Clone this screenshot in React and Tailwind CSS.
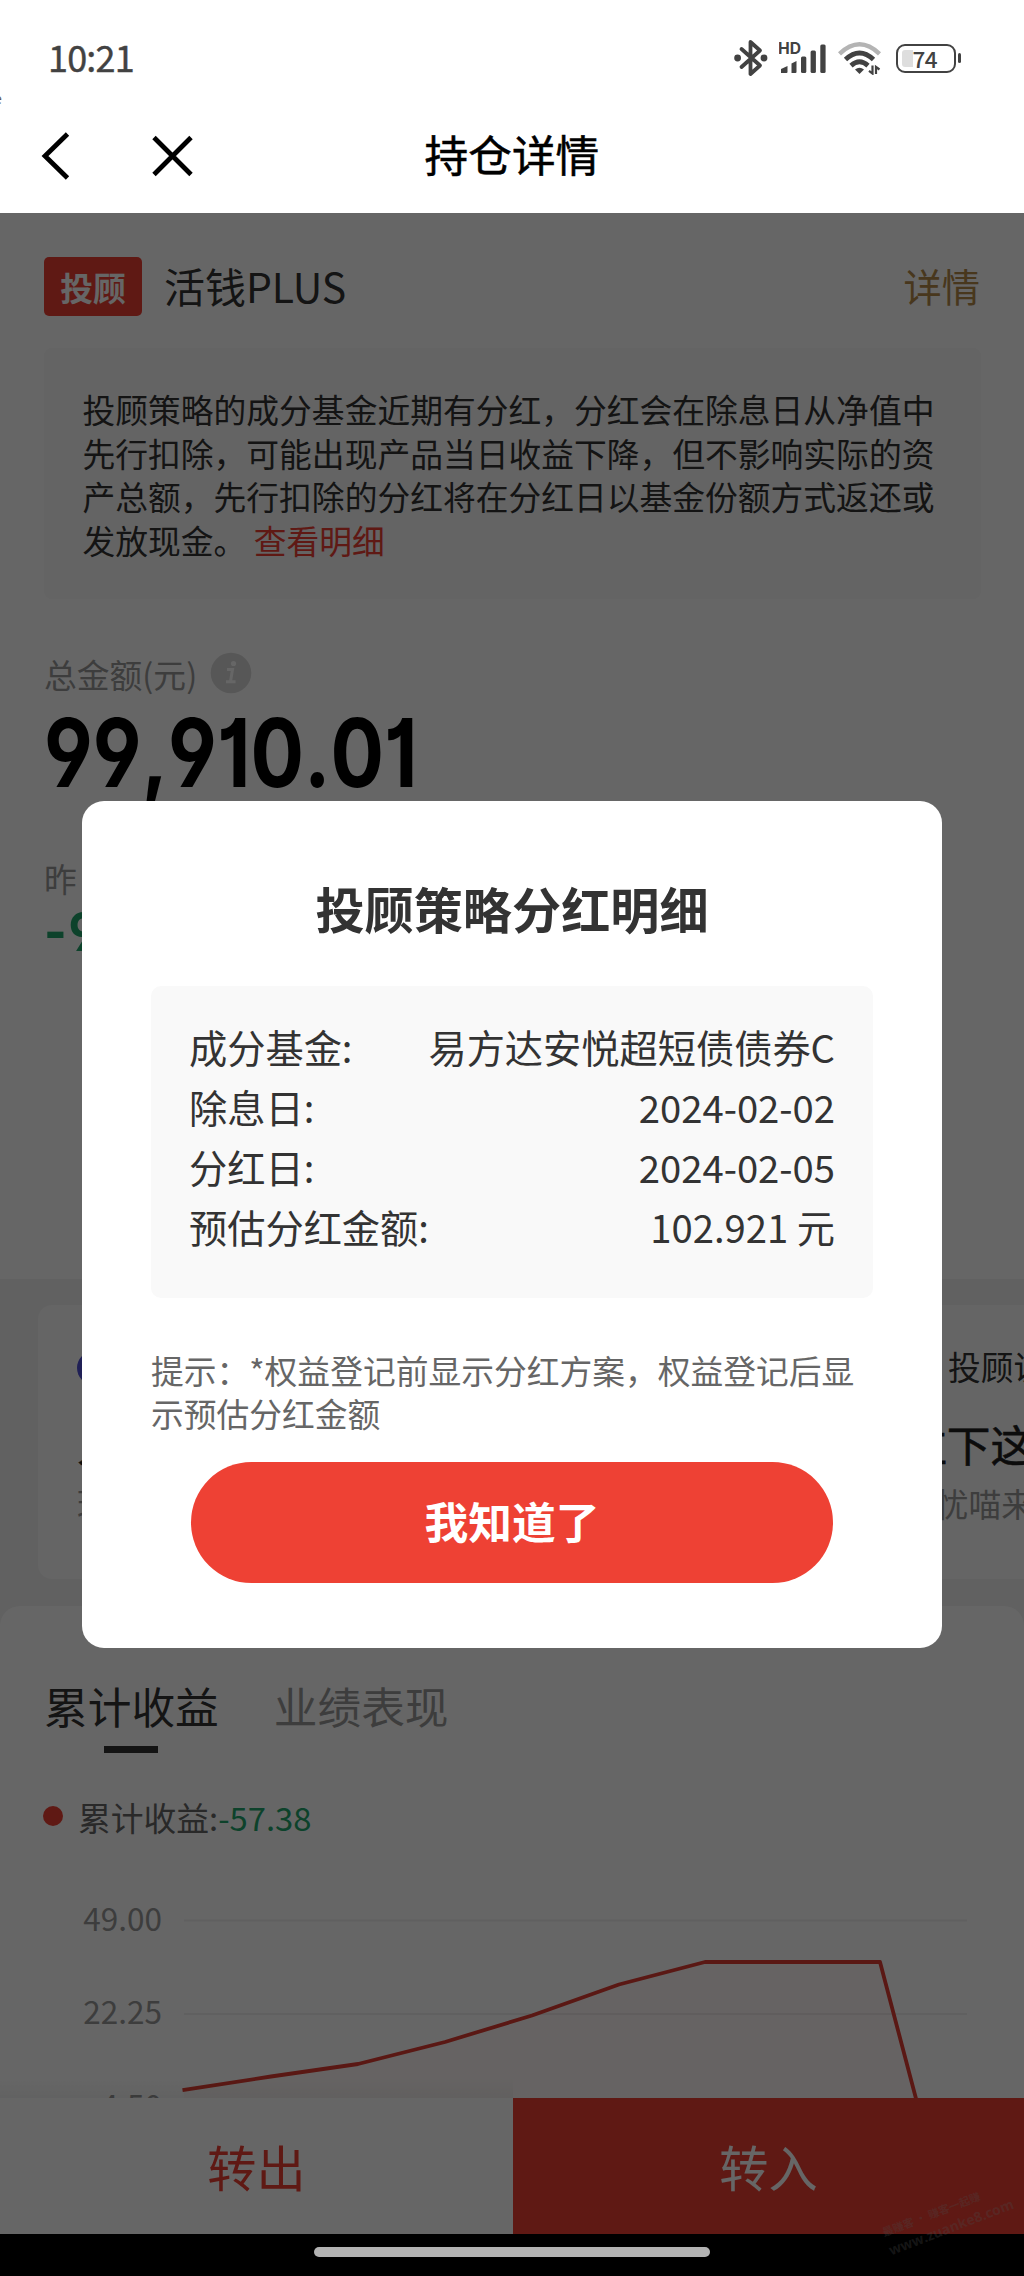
const dividend = [
  ["成分基金:", "易方达安悦超短债债券C"],
  ["除息日:", "2024-02-02"],
  ["分红日:", "2024-02-05"],
  ["预估分红金额:", "102.921 元"],
];

const digits = "font-['Inter'] font-bold [font-kerning:none] [font-feature-settings:'ss01','cv01'] origin-left whitespace-nowrap w-max";

function BluetoothIcon() {
  return (
    <svg width="34" height="38" viewBox="0 0 34 38" fill="none" stroke="#424242" strokeWidth="3.8" strokeLinejoin="round" strokeLinecap="round">
      <path d="M7.5 10 L26 26.5 L16.5 35 V3 L26 11.5 L7.5 28" />
      <circle cx="3.6" cy="19" r="1.5" fill="#424242" />
      <circle cx="30" cy="19" r="1.5" fill="#424242" />
    </svg>
  );
}

function SignalIcon() {
  return (
    <svg width="48" height="34" viewBox="0 0 48 34" fill="#424242">
      <text x="-1" y="13" fontSize="16" fontWeight="700" fontFamily="Inter" fill="#424242" textLength="23" lengthAdjust="spacingAndGlyphs">HD</text>
      <path d="M2 32 V28 L8.5 25 V31 Q8.500 32 7.500 32 Z" />
      <path d="M12.500 32 V22.500 L17.500 20 V31 Q17.500 32 16.500 32 Z" />
      <rect x="22" y="15.500" width="5.300" height="16.500" rx="1.500" />
      <rect x="31.600" y="9.500" width="5.300" height="22.500" rx="1.500" />
      <rect x="41.300" y="3.500" width="5.300" height="28.500" rx="1.500" />
    </svg>
  );
}

function WifiIcon() {
  return (
    <svg width="44" height="34" viewBox="0 0 44 34" fill="none" strokeWidth="4.4">
      <path d="M1.500 12.800 Q21.500 -6.200 41.500 12.800" stroke="#b4b4b4" />
      <path d="M7.500 18.500 Q21.500 5.500 35.500 18.500" stroke="#424242" strokeWidth="4.800" />
      <path d="M13 24.600 Q21.500 17 30 24.600" stroke="#424242" strokeWidth="4.800" />
      <path d="M17 28.500 Q21.500 24.800 26 28.500 L21.500 33 Z" fill="#424242" />
      <path d="M34.500 24.500 V32.500 L31 29.800" stroke="#424242" strokeWidth="2.200" />
      <path d="M38 33 V26 L41.500 28.500" stroke="#424242" strokeWidth="2.200" />
    </svg>
  );
}

function StatusBar() {
  return (
    <div className="flex h-[93px] items-center justify-between pt-[23px] pr-[63px] pl-[48px] text-[#424242]">
      <span className="-mt-[5px] text-[36px] leading-[50px] tracking-[-0.8px] [-webkit-text-stroke:0.4px]">10:21</span>
      <div className="flex items-center">
        <BluetoothIcon />
        <span className="ml-[11px] flex"><SignalIcon /></span>
        <span className="ml-[11px] flex"><WifiIcon /></span>
        <span className="ml-[14px] flex h-[29px] w-[60px] items-center rounded-[9px] border-[2.5px] border-[#424242] p-[4px]">
          <span className="flex h-full w-[38px] items-center rounded-l-[3px] bg-gradient-to-r from-[#dedede] from-30% to-white to-30% pl-[11px] text-[22.500px] leading-none font-medium tracking-[-0.5px]">74</span>
        </span>
        <span className="ml-[2px] h-[10px] w-[3.500px] rounded-full bg-[#424242]" />
      </div>
    </div>
  );
}

function NavBar() {
  return (
    <div className="flex h-[120px] items-center">
      <svg className="mt-[6px]" width="340" height="60" viewBox="0 0 340 60" fill="none" stroke="#000" strokeWidth="4.800">
        <path d="M67.500 8 L45 30 L67.500 52" />
        <path d="M154 11.500 L191 48.500 M191 11.500 L154 48.500" />
      </svg>
      <h1 className="ml-[84.500px] text-[43.690px] leading-[60px] text-black [-webkit-text-stroke:0.5px]">持仓详情</h1>
    </div>
  );
}

function Chart() {
  return (
    <svg className="block" width="1024" height="259.500" viewBox="0 1838.500 1024 259.500">
      <defs>
        <linearGradient id="lift" x1="0" y1="0" x2="0" y2="1">
          <stop offset="0" stopColor="#000" stopOpacity="0" />
          <stop offset="1" stopColor="#000" stopOpacity="0.04" />
        </linearGradient>
      </defs>
      <path d="M184 1920 H967 M184 2013.500 H967" stroke="#f0f0f0" strokeWidth="2" />
      <g fontSize="31.500" fill="#999" textAnchor="end">
        <text x="162" y="1930">49.00</text>
        <text x="162" y="2023.500">22.25</text>
        <text x="162" y="2117.500">-4.50</text>
      </g>
      <path d="M184 2089.500 L271 2076 L358 2063.500 L445 2041.500 L532 2015 L619 1984 L705 1961.500 H880 L916.500 2100 H184 Z" fill="#ee4134" fillOpacity="0.04" />
      <path d="M182.500 2089.700 L271 2076 L358 2063.500 L445 2041.500 L532 2015 L619 1984 L705 1961.500 H880 L916.500 2100" fill="none" stroke="#e03d32" strokeWidth="3.800" strokeLinejoin="round" />
      <rect x="0" y="2078" width="513" height="20" fill="url(#lift)" />
    </svg>
  );
}

function Summary() {
  return (
    <section className="h-[1066px] bg-white px-[44px] pt-[44px]">
      <div className="flex h-[59px] items-center">
        <span className="flex h-[59px] w-[98px] items-center justify-center rounded-[5px] bg-[#ee4034] text-[32.770px] leading-[44px] font-bold text-white">投顾</span>
        <span className="-mt-[3px] ml-[22px] text-[40.960px] leading-[54px] text-[#333]">活钱PLUS</span>
        <span className="-mt-[2px] ml-auto text-[38.230px] leading-[54px] text-[#b58a4a]">详情</span>
      </div>
      <div className="mt-[32px] h-[251px] w-[937px] rounded-[8px] bg-[#f9f9f9] px-[38.500px] pt-[39px] text-[32.770px] leading-[43.690px] whitespace-nowrap text-[#333]">
        投顾策略的成分基金近期有分红，分红会在除息日从净值中<br />
        先行扣除，可能出现产品当日收益下降，但不影响实际的资<br />
        产总额，先行扣除的分红将在分红日以基金份额方式返还或<br />
        发放现金。 <span className="text-[#ee4034]">查看明细</span>
      </div>
      <div className="mt-[52.500px] flex h-[44px] items-center">
        <span className="text-[32.770px] leading-[44px] text-[#999]">总金额(元)</span>
        <svg className="-mt-[2px] ml-[13px]" width="42" height="42" viewBox="0 0 42 42">
          <circle cx="21" cy="21" r="20.300" fill="#dadada" />
          <circle cx="23.500" cy="11.500" r="2.600" fill="#fff" />
          <path d="M17 17.500 H22.500 L20.500 29.500 M16 29.800 H25.500" fill="none" stroke="#fff" strokeWidth="3" />
        </svg>
      </div>
      <div className={digits + " mt-[7px] scale-x-[0.836] text-[95px] leading-[100px] text-black"}>99,910.01</div>
      <div className="mt-[53px] text-[32.770px] leading-[44px] text-[#999]">昨</div>
      <div className={digits + " mt-[4px] scale-x-[0.9] tracking-[2px] text-[54px] leading-[56px] text-[#22a66c]"}>-9</div>
    </section>
  );
}

function Posts() {
  return (
    <section className="flex h-[327px] overflow-hidden bg-[#f2f2f2] pt-[26px] pl-[38px]">
      <div className="flex h-[274px] w-[986px] shrink-0 rounded-l-[14px] bg-[#fcfcfc] pl-[39px] whitespace-nowrap">
        <div className="w-[826px] shrink-0">
          <div className="mt-[46px] h-[34px] w-[34px] rounded-full bg-[#5151d8]" />
          <div className="mt-[28px] text-[43.690px] leading-[60px] text-[#1f1f1f] [-webkit-text-stroke:0.6px]">人</div>
          <div className="mt-[8px] text-[32.770px] leading-[44px] text-[#999]">理</div>
        </div>
        <div>
          <div className="mt-[39px] ml-[45px] text-[32.770px] leading-[44px] text-[#333]">投顾说</div>
          <div className="mt-[25px] text-[43.690px] leading-[60px] text-[#1f1f1f] [-webkit-text-stroke:0.6px]">拉下这</div>
          <div className="mt-[8px] text-[32.770px] leading-[44px] text-[#999]">无忧喵来</div>
        </div>
      </div>
    </section>
  );
}

function Earnings() {
  return (
    <section className="bg-[#f2f2f2]">
      <div className="h-[492px] overflow-hidden rounded-t-[20px] bg-white pt-[77px]">
        <div className="flex gap-[55px] pl-[44px] text-[43.690px] leading-[44px]">
          <div className="flex flex-col items-center">
            <span className="text-[#333]">累计收益</span>
            <span className="mt-[18.500px] mr-[1px] h-[7.500px] w-[54px] bg-[#333]" />
          </div>
          <span className="text-[#999]">业绩表现</span>
        </div>
        <div className="mt-[41.500px] flex items-center pl-[43px] text-[32.770px] leading-[44px] text-[#666]">
          <span className="-mt-[2px] h-[20px] w-[20px] rounded-full bg-[#ee4034]" />
          <span className="ml-[15px]">累计收益:</span>
          <span className="text-[#22a66c]">-57.38</span>
        </div>
        <Chart />
      </div>
    </section>
  );
}

function Dialog() {
  return (
    <div className="h-[847px] w-[860px] rounded-[22px] bg-white px-[69px] pt-[74px]">
      <h2 className="text-center text-[49.150px] leading-[66px] font-bold text-[#333]">投顾策略分红明细</h2>
      <div className="mt-[45px] h-[312px] rounded-[10px] bg-[#f9f9f9] px-[38px] pt-[31px] text-[38.230px] leading-[60px] text-[#333]">
        {dividend.map(([label, value]) => (
          <div key={label} className="flex justify-between whitespace-nowrap">
            <span>{label}</span>
            <span>{value}</span>
          </div>
        ))}
      </div>
      <p className="mt-[49.500px] text-[32.770px] leading-[43.690px] whitespace-nowrap text-[#666]">
        提示：*权益登记前显示分红方案，权益登记后显<br />示预估分红金额
      </p>
      <button className="mx-auto mt-[27px] flex h-[121px] w-[642px] items-center justify-center rounded-full bg-[#ee4134] pb-[3px] text-[43.690px] font-bold text-white">
        我知道了
      </button>
    </div>
  );
}

export default function App() {
  return (
    <div className="relative h-[2276px] w-[1024px] overflow-hidden bg-white font-['Noto_Sans_CJK_SC',sans-serif]">
      <StatusBar />
      <NavBar />
      <Summary />
      <Posts />
      <Earnings />
      <div className="flex h-[136px] text-[49.150px] leading-[136px]">
        <div className="w-[513px] bg-white text-center text-[#ee4034]">转出</div>
        <div className="flex-1 bg-[#ee4034] text-center text-white">转入</div>
      </div>
      <div className="flex h-[42px] justify-center bg-black pt-[13px]">
        <div className="h-[10px] w-[396px] rounded-full bg-[#b3b3b3]" />
      </div>
      <div className="absolute top-[213px] right-0 bottom-[42px] left-0 flex items-center justify-center bg-black/60 pt-[2px]">
        <Dialog />
      </div>
      <div className="absolute top-[2200px] left-[882px] w-[120px] origin-center -rotate-[21deg] text-[11px] whitespace-nowrap text-[#4a4a4a]/30">
        <div className="leading-[20px] font-bold">最赚客 · 赚客一起赚</div>
        <div className="font-['Open_Sans'] text-[14px] leading-[20px] font-bold">www.zuanke8.com</div>
      </div>
      <div className="absolute top-[88px] -left-[6px] text-[14px] leading-[20px] text-[#555]">e</div>
    </div>
  );
}
